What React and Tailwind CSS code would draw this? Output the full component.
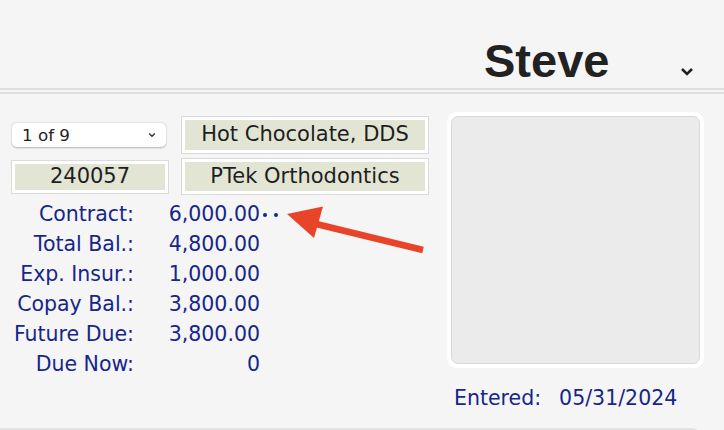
export default function App() {
  const rows = [
    { label: "Contract:", value: "6,000.00", dots: true },
    { label: "Total Bal.:", value: "4,800.00" },
    { label: "Exp. Insur.:", value: "1,000.00" },
    { label: "Copay Bal.:", value: "3,800.00" },
    { label: "Future Due:", value: "3,800.00" },
    { label: "Due Now:", value: "0" },
  ]

  return (
    <div className="relative w-[724px] h-[430px] overflow-hidden bg-[#f5f5f5] flex flex-col font-['DejaVu_Sans',sans-serif]">
      {/* header */}
      <div className="h-[88px] flex items-start shrink-0">
        <span className="ml-[484px] mt-[37px] text-[47px] leading-none font-bold text-[#222] font-['Liberation_Sans',Arial,sans-serif]">Steve</span>
        <svg className="ml-[71px] mt-[67px]" width="14" height="9" viewBox="0 0 14 9">
          <polyline points="2,2 7,7 12,2" fill="none" stroke="#222" strokeWidth="2.6" />
        </svg>
      </div>
      <div className="h-[2px] bg-[#dedede] shrink-0" />
      <div className="h-[2px] mt-[2px] bg-[#dedede] shrink-0" />

      {/* body */}
      <div className="flex pl-[12px] pt-[18px] shrink-0">
        <div className="w-[416px] mt-[5px] flex flex-col">
          <div className="flex items-center">
            <div className="w-[154px] h-[24px] bg-white rounded-[5px] shadow-[0_0.5px_2px_rgba(0,0,0,0.28)] flex items-center justify-between pl-[10px] pr-[10px]">
              <span className="text-[16.7px] leading-none text-[#222]">1 of 9</span>
              <svg width="8" height="6" viewBox="0 0 8 6">
                <polyline points="1.2,1.5 4,4.3 6.8,1.5" fill="none" stroke="#333" strokeWidth="1.4" />
              </svg>
            </div>
            <div className="ml-[16px] w-[246px] h-[36px] bg-[#e3e5d4] border-[3px] border-white shadow-[0_0_0_1px_#dadada] flex items-center justify-center text-[21px] text-[#1e1e1e]">
              Hot Chocolate, DDS
            </div>
          </div>
          <div className="flex items-center mt-[6px]">
            <div className="w-[156px] h-[32px] bg-[#e3e5d4] border-[3px] border-white shadow-[0_0_0_1px_#dadada] flex items-center justify-center text-[21px] text-[#1e1e1e]">
              240057
            </div>
            <div className="ml-[14px] w-[246px] h-[35px] bg-[#e3e5d4] border-[3px] border-white shadow-[0_0_0_1px_#dadada] flex items-center justify-center text-[21px] text-[#1e1e1e]">
              PTek Orthodontics
            </div>
          </div>

          <div className="mt-[5px] flex flex-col text-[20.5px] leading-[30px] text-[#16268a]">
            {rows.map((r) => (
              <div key={r.label} className="flex items-center">
                <span className="w-[122px] text-right">{r.label}</span>
                <span className="w-[126px] text-right">{r.value}</span>
                {r.dots && (
                  <span className="flex items-center gap-[7px] ml-[3px] mt-[2px]">
                    <span className="w-[4px] h-[4px] rounded-full bg-[#16268a]" />
                    <span className="w-[4px] h-[4px] rounded-full bg-[#16268a]" />
                  </span>
                )}
              </div>
            ))}
          </div>
        </div>

        <div className="ml-[19px] flex flex-col">
          <div className="w-[257px] h-[256px] bg-white rounded-[10px] p-[4px]">
            <div className="w-full h-full bg-[#ebebeb] rounded-[7px] border border-[#d9d9d9]" />
          </div>
          <div className="mt-[15px] pl-[7px] flex text-[20.5px] leading-[30px] text-[#16268a]">
            <span>Entered:</span>
            <span className="ml-[18px]">05/31/2024</span>
          </div>
        </div>
      </div>

      {/* next card edge */}
      <div className="mt-[15px] w-[700px] h-[12px] border-t-2 border-r-2 border-[#e2e2e2] rounded-tr-[8px] shrink-0" />

      {/* annotation arrow */}
      <svg className="absolute left-0 top-0 pointer-events-none" width="724" height="430" viewBox="0 0 724 430">
        <line x1="308" y1="222" x2="423" y2="250" stroke="#e8442a" strokeWidth="6.5" />
        <polygon points="287,214 323,206.5 314,238" fill="#e8442a" />
      </svg>
    </div>
  )
}
